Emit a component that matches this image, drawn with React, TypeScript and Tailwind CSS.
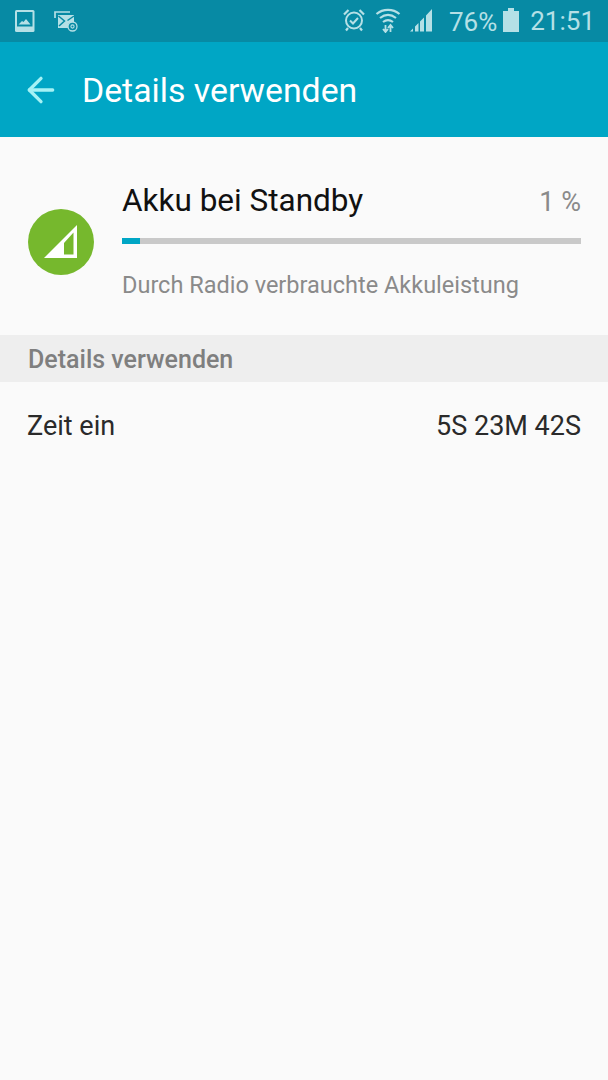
import { ArrowLeft } from "lucide-react";

function StatusIcons() {
  return (
    <>
      <svg width="22" height="24" viewBox="0 0 22 24" className="absolute left-[14px] top-[9px]">
        <rect x="1" y="1" width="19.500" height="22" rx="1.500" fill="#b5e0e6" />
        <rect x="3" y="3" width="15.500" height="14.500" fill="#078aa4" />
        <path d="M4.500 15.500l3.500-3.500 1.500 1 2.500-3 4.500 5.500z" fill="#b5e0e6" />
      </svg>
      <svg width="26" height="24" viewBox="0 0 26 24" className="absolute left-[53px] top-[9px]">
        <path d="M2 9V3h15" fill="none" stroke="#b5e0e6" strokeWidth="1.700" />
        <rect x="5" y="6" width="16" height="13" fill="#b5e0e6" />
        <path d="M5.500 7l6 5-5.500 5M21 7l-6.500 4.500" fill="none" stroke="#078aa4" strokeWidth="1.500" />
        <circle cx="19.500" cy="17.500" r="4.500" fill="#078aa4" stroke="#b5e0e6" strokeWidth="1.300" />
        <circle cx="19.500" cy="17.500" r="1.600" fill="none" stroke="#b5e0e6" strokeWidth="1.100" />
      </svg>
      <svg width="24" height="24" viewBox="0 0 24 24" fill="none" stroke="#b5e0e6" className="absolute left-[342px] top-[8px]">
        <circle cx="12" cy="12.500" r="8" strokeWidth="2" />
        <path d="M8 12.500l3 3 5-5.500" strokeWidth="2" />
        <path d="M2 6.500l4.500-4.500M22 6.500L17.500 2M6 20l-2 2.500M18 20l2 2.500" strokeWidth="2.200" />
      </svg>
      <svg width="26" height="26" viewBox="0 0 26 26" fill="none" stroke="#b5e0e6" strokeWidth="2.200" className="absolute left-[375px] top-[7px]">
        <path d="M1.500 7C8 1.500 18 1.500 24.500 7" />
        <path d="M5 11c5-4 11-4 16 0" />
        <path d="M8 15c3-2.300 7-2.300 10 0" />
        <path d="M10.500 18v7M8 22l2.500 3 2.500-3M15.500 25v-7M13 21l2.500-3 2.500 3" strokeWidth="1.800" />
      </svg>
      <svg width="26" height="24" viewBox="0 0 26 24" fill="#b5e0e6" className="absolute left-[408px] top-[8px]">
        <path d="M2 23.500l3-3v3zM7 23.500v-5l3.500-3.500v8.500zM12 23.500v-10l4-4v14zM18 23.500V7.500l6-6.500v22.500z" />
      </svg>
      <svg width="16" height="24" viewBox="0 0 16 24" fill="#b5e0e6" className="absolute left-[503px] top-[8px]">
        <path d="M5 0h6v3h5v21H0V3h5z" />
      </svg>
    </>
  );
}

export default function App() {
  return (
    <div className="min-h-[1080px] bg-[#fafafa] font-['Roboto',sans-serif]">
      <div className="relative flex h-[42px] items-center justify-end bg-[#078aa4] pr-[13px] text-[26px] text-[#b5e0e6]">
        <StatusIcons />
        <span className="absolute left-[449px] top-[5px] leading-[34px]">76%</span>
        <span className="leading-[34px]">21:51</span>
      </div>

      <div className="flex h-[95px] items-center bg-[#00a6c5] pl-[21px]">
        <ArrowLeft size={40} strokeWidth={2} className="text-[#a5f2f5]" />
        <span className="ml-[21px] pt-[2px] text-[33.800px] leading-none text-white">Details verwenden</span>
      </div>

      <div className="flex h-[198px] items-start pl-[28px] pr-[27px] pt-[44px]">
        <div className="mt-[28px] flex size-[66px] shrink-0 items-center justify-center rounded-full bg-[#76b82d]">
          <svg width="34" height="34" viewBox="0 0 34 34">
            <path fillRule="evenodd" d="M33 0v33H0zM20 18v11.500h9.500V7.500z" fill="#fff" />
          </svg>
        </div>
        <div className="ml-[28px] min-w-0 flex-1">
          <div className="flex items-baseline justify-between">
            <span className="text-[31.500px] leading-[40px] text-[#111]">Akku bei Standby</span>
            <span className="text-[27px] text-[#8a8a8a]">1 %</span>
          </div>
          <div className="mt-[15px] h-[6px] bg-[#c9c9c9]">
            <div className="h-full w-[18px] bg-[#00a6c5]" />
          </div>
          <p className="mt-[26px] text-[23.500px] leading-[30px] text-[#8a8a8a]">Durch Radio verbrauchte Akkuleistung</p>
        </div>
      </div>

      <div className="flex h-[47px] items-center bg-[#eeeeee] pl-[28px] pt-[2px]">
        <span className="text-[25px] font-medium text-[#7f7f7f]">Details verwenden</span>
      </div>

      <div className="flex h-[87px] items-center justify-between pl-[27px] pr-[27px] pt-[2px]">
        <span className="text-[27px] text-[#2a2a2a]">Zeit ein</span>
        <span className="text-[27px] text-[#2a2a2a]">5S 23M 42S</span>
      </div>
    </div>
  );
}
